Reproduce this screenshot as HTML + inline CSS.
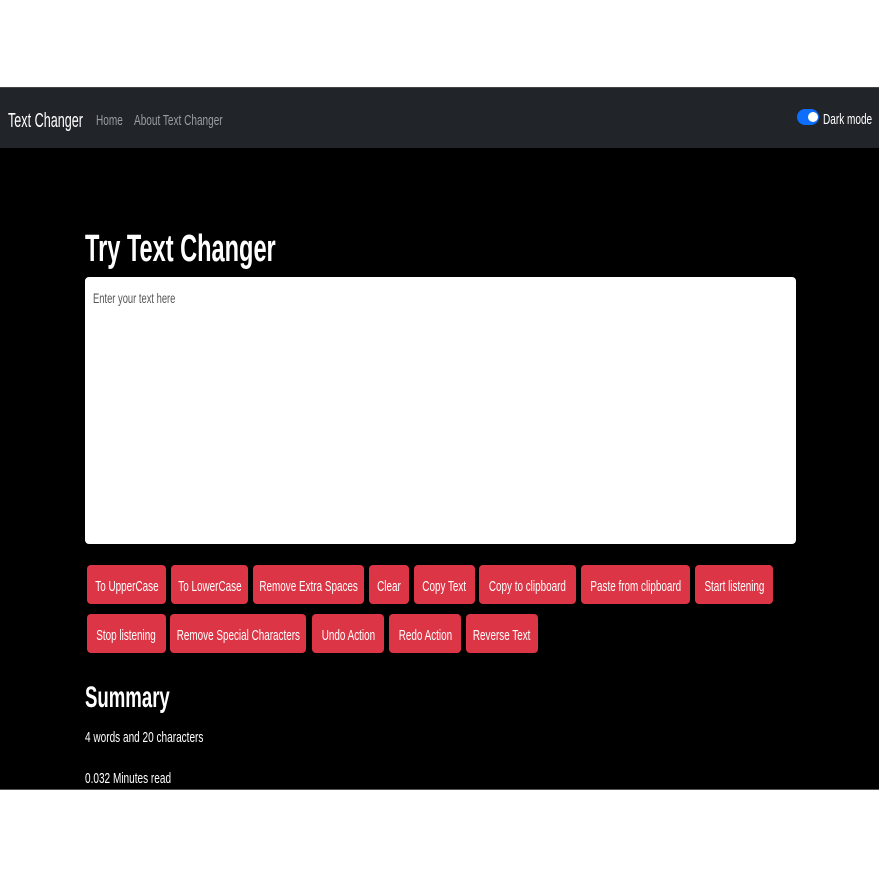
<!DOCTYPE html>
<html><head><style>
body{margin:0;width:879px;height:881px;background:#fff;position:relative;overflow:hidden;font-family:"Liberation Sans",sans-serif}
.a{position:absolute}
.t{position:absolute;white-space:nowrap;transform-origin:0 50%;transform:scaleX(.67)}
.nav{left:0;top:87px;width:879px;height:61px;background:#212529;border-top:1px solid #444}
.main{left:0;top:148px;width:879px;height:641px;background:#000;border-bottom:1px solid #555}
.b{position:absolute;height:39px;background:#dc3545;border-radius:4px;color:#fff;font-size:15px;display:flex;align-items:center;justify-content:center;overflow:hidden}
.b span{display:inline-block;transform:scaleX(.66);white-space:nowrap;position:relative;top:2px}
</style></head><body>
<div class="a nav"></div>
<div class="t" style="left:8px;top:110px;color:#fff;font-size:20px;transform:scaleX(.63)">Text Changer</div>
<div class="t" style="left:96px;top:112px;color:#9a9da0;font-size:15px">Home</div>
<div class="t" style="left:134px;top:112px;color:#9a9da0;font-size:15px">About Text Changer</div>
<div class="a" style="left:797px;top:109px;width:22px;height:16px;border-radius:8px;background:#0d6efd"></div>
<div class="a" style="left:808px;top:112px;width:10px;height:10px;border-radius:5px;background:#fff"></div>
<div class="t" style="left:823px;top:111px;color:#fff;font-size:15px">Dark mode</div>
<div class="a main"></div>
<div class="t" style="left:85px;top:228px;color:#fff;font-size:38px;font-weight:bold;transform:scaleX(.62)">Try Text Changer</div>
<div class="a" style="left:85px;top:277px;width:711px;height:267px;background:#fff;border-radius:4px"></div>
<div class="t" style="left:93px;top:290px;color:#555;font-size:14px">Enter your text here</div>
<div class="b" style="left:87px;top:565px;width:79px"><span>To UpperCase</span></div>
<div class="b" style="left:171px;top:565px;width:77px"><span>To LowerCase</span></div>
<div class="b" style="left:253px;top:565px;width:111px"><span>Remove Extra Spaces</span></div>
<div class="b" style="left:369px;top:565px;width:40px"><span>Clear</span></div>
<div class="b" style="left:414px;top:565px;width:61px"><span>Copy Text</span></div>
<div class="b" style="left:479px;top:565px;width:97px"><span>Copy to clipboard</span></div>
<div class="b" style="left:581px;top:565px;width:109px"><span>Paste from clipboard</span></div>
<div class="b" style="left:695px;top:565px;width:78px"><span>Start listening</span></div>
<div class="b" style="left:87px;top:614px;width:79px"><span>Stop listening</span></div>
<div class="b" style="left:170px;top:614px;width:136px"><span>Remove Special Characters</span></div>
<div class="b" style="left:312px;top:614px;width:72px"><span>Undo Action</span></div>
<div class="b" style="left:389px;top:614px;width:72px"><span>Redo Action</span></div>
<div class="b" style="left:466px;top:614px;width:72px"><span>Reverse Text</span></div>
<div class="t" style="left:85px;top:681px;color:#fff;font-size:30px;font-weight:bold;transform:scaleX(.62)">Summary</div>
<div class="t" style="left:85px;top:729px;color:#fff;font-size:15px">4 words and 20 characters</div>
<div class="t" style="left:85px;top:770px;color:#fff;font-size:15px">0.032 Minutes read</div>
</body></html>
